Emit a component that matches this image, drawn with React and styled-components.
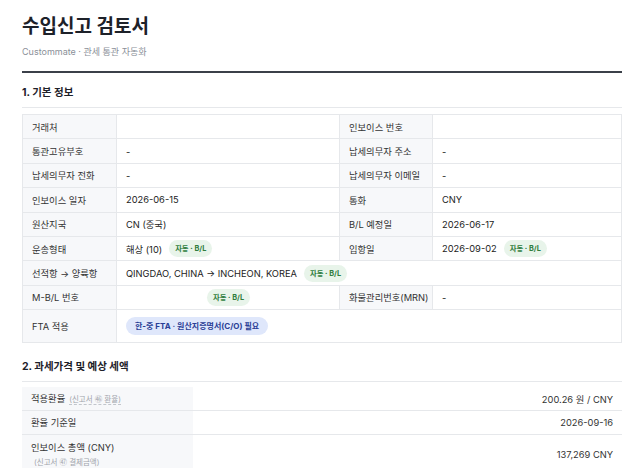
import React from "react";
import styled, { createGlobalStyle } from "styled-components";

const Global = createGlobalStyle`
  html, body { margin: 0; padding: 0; background: #fff; }
  body { font-family: "Inter", "Noto Sans CJK KR", sans-serif; color: #222; }
`;

const Page = styled.div`
  padding: 14px 18px 20px 22px;
  width: 600px;
`;

const Title = styled.h1`
  margin: 0;
  font-size: 19px;
  font-weight: 700;
  color: #1d2129;
  line-height: 26px;
`;

const Subtitle = styled.div`
  margin-top: 6px;
  font-size: 9px;
  color: #8a8f98;
  line-height: 12px;
`;

const Rule = styled.div`
  margin-top: 13px;
  height: 2px;
  background: #3b4049;
`;

const SectionTitle = styled.h2`
  margin: ${(p) => p.$top}px 0 0;
  padding-bottom: 6px;
  border-bottom: 1px solid #e6e8eb;
  font-size: 10.5px;
  font-weight: 700;
  color: #1d2129;
  line-height: 16px;
`;

const InfoGrid = styled.div`
  margin-top: 6px;
  display: grid;
  grid-template-columns: 94px 223px 93px 1fr;
  border-top: 1px solid #e6e8eb;
  border-left: 1px solid #e6e8eb;
`;

const Cell = styled.div`
  display: flex;
  align-items: center;
  gap: 7px;
  padding: 0 8px 0 9px;
  box-sizing: border-box;
  white-space: nowrap;
  border-right: 1px solid #e6e8eb;
  border-bottom: 1px solid #e6e8eb;
  font-size: 9.3px;
  color: #222;
  grid-column: ${(p) => (p.$span ? `span ${p.$span}` : "auto")};
  justify-content: ${(p) => (p.$center ? "center" : "flex-start")};
  min-height: ${(p) => (p.$tall ? "33px" : "24.4px")};
`;

const Label = styled(Cell)`
  background: #f7f8fa;
  color: #333;
`;

const AutoBadge = styled.span`
  display: inline-block;
  padding: 4px 6px;
  border-radius: 9px;
  background: #e8f4ea;
  color: #2f7d3d;
  font-size: 7.3px;
  font-weight: 700;
  line-height: 9px;
`;

const FtaBadge = styled.span`
  display: inline-block;
  padding: 4px 9px;
  border-radius: 10px;
  background: #dfe7fb;
  color: #2a3e96;
  font-size: 8px;
  font-weight: 700;
  line-height: 10px;
`;

const TaxTable = styled.div`
  margin-top: 5px;
  display: grid;
  grid-template-columns: 171px 1fr;
`;

const TaxLabel = styled.div`
  background: #f7f8fa;
  border-bottom: 1px solid #e6e8eb;
  padding: ${(p) => (p.$tall ? "6px 9px 4px" : "0 9px")};
  min-height: 23px;
  display: flex;
  flex-direction: column;
  justify-content: center;
  font-size: 9.3px;
  color: #333;
  line-height: 13px;
`;

const TaxValue = styled.div`
  border-bottom: 1px solid #e6e8eb;
  padding: 0 9px;
  display: flex;
  align-items: center;
  justify-content: flex-end;
  font-size: 9.3px;
  color: #333;
`;

const Note = styled.span`
  margin-left: 4px;
  font-size: 7.5px;
  color: #a0a4ab;
  border-bottom: 1px dashed #c2c6cc;
`;

const SubNote = styled.span`
  display: block;
  align-self: flex-start;
  margin: 2px 0 0 3px;
  font-size: 7.5px;
  color: #a0a4ab;
  border-bottom: 1px dashed #c2c6cc;
`;

export default function App() {
  return (
    <>
      <Global />
      <Page>
        <Title>수입신고 검토서</Title>
        <Subtitle>Custommate · 관세 통관 자동화</Subtitle>
        <Rule />

        <SectionTitle $top={12}>1. 기본 정보</SectionTitle>
        <InfoGrid>
          <Label>거래처</Label>
          <Cell></Cell>
          <Label>인보이스 번호</Label>
          <Cell></Cell>

          <Label>통관고유부호</Label>
          <Cell>-</Cell>
          <Label>납세의무자 주소</Label>
          <Cell>-</Cell>

          <Label>납세의무자 전화</Label>
          <Cell>-</Cell>
          <Label>납세의무자 이메일</Label>
          <Cell>-</Cell>

          <Label>인보이스 일자</Label>
          <Cell>2026-06-15</Cell>
          <Label>통화</Label>
          <Cell>CNY</Cell>

          <Label>원산지국</Label>
          <Cell>CN (중국)</Cell>
          <Label>B/L 예정일</Label>
          <Cell>2026-06-17</Cell>

          <Label>운송형태</Label>
          <Cell>
            해상 (10) <AutoBadge>자동 · B/L</AutoBadge>
          </Cell>
          <Label>입항일</Label>
          <Cell>
            2026-09-02 <AutoBadge>자동 · B/L</AutoBadge>
          </Cell>

          <Label>선적항 → 양륙항</Label>
          <Cell $span={3}>
            QINGDAO, CHINA → INCHEON, KOREA <AutoBadge>자동 · B/L</AutoBadge>
          </Cell>

          <Label>M-B/L 번호</Label>
          <Cell $center>
            <AutoBadge>자동 · B/L</AutoBadge>
          </Cell>
          <Label>화물관리번호(MRN)</Label>
          <Cell>-</Cell>

          <Label $tall>FTA 적용</Label>
          <Cell $span={3} $tall>
            <FtaBadge>한-중 FTA · 원산지증명서(C/O) 필요</FtaBadge>
          </Cell>
        </InfoGrid>

        <SectionTitle $top={16}>2. 과세가격 및 예상 세액</SectionTitle>
        <TaxTable>
          <TaxLabel>
            <span>
              적용환율<Note>(신고서 ㊻ 환율)</Note>
            </span>
          </TaxLabel>
          <TaxValue>200.26 원 / CNY</TaxValue>

          <TaxLabel>환율 기준일</TaxLabel>
          <TaxValue>2026-09-16</TaxValue>

          <TaxLabel $tall>
            <span>인보이스 총액 (CNY)</span>
            <SubNote>(신고서 ㊼ 결제금액)</SubNote>
          </TaxLabel>
          <TaxValue>137,269 CNY</TaxValue>
        </TaxTable>
      </Page>
    </>
  );
}
